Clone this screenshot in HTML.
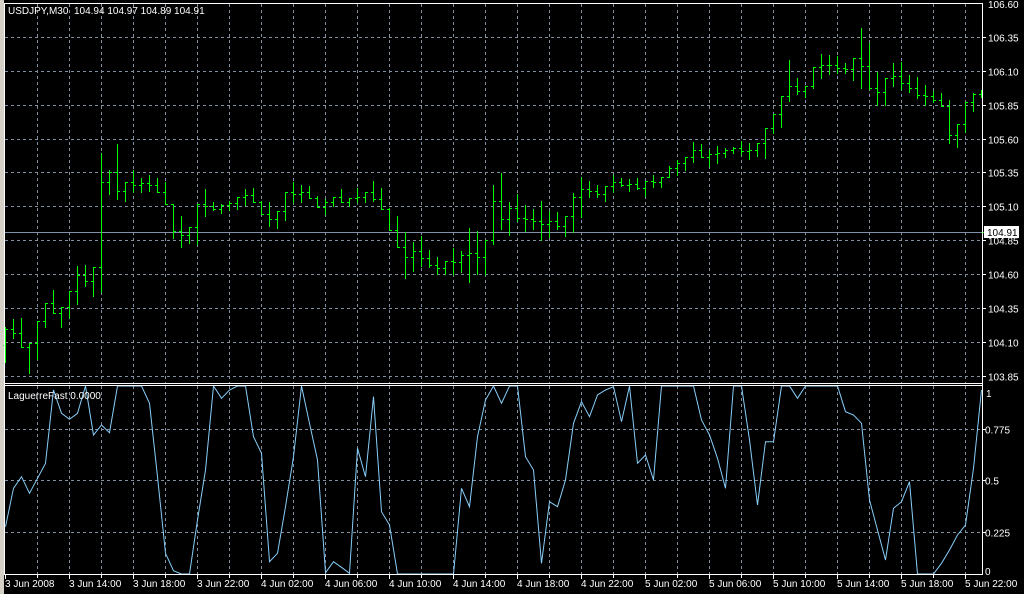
<!DOCTYPE html>
<html><head><meta charset="utf-8"><style>
html,body{margin:0;padding:0;background:#000;width:1024px;height:594px;overflow:hidden}
svg{display:block}
text{font-family:"Liberation Sans",sans-serif;font-size:10px;fill:#fff;white-space:pre}
</style></head><body>
<svg id="s" width="1024" height="594" xmlns="http://www.w3.org/2000/svg" shape-rendering="crispEdges">
<rect width="1024" height="594" fill="#000"/>
<rect x="0" y="0" width="4" height="594" fill="#d4d0c8"/>
<g id="grid" stroke="#8090a0" stroke-width="1" stroke-dasharray="3,3" fill="none"></g>
<line x1="5" y1="232.5" x2="982" y2="232.5" stroke="#8090a8" stroke-width="1"/>
<g id="bars" stroke="#00ff00" stroke-width="1" fill="none"></g>
<polyline id="ind" fill="none" stroke="#87cefa" stroke-width="1" shape-rendering="auto"/>
<g stroke="#fff" stroke-width="1" fill="none">
<line x1="4.5" y1="3" x2="4.5" y2="575"/>
<line x1="982.5" y1="3" x2="982.5" y2="575"/>
<line x1="4" y1="3.5" x2="983" y2="3.5"/>
<line x1="4" y1="383.5" x2="983" y2="383.5"/>
<line x1="4" y1="385.5" x2="983" y2="385.5"/>
<line x1="4" y1="574.5" x2="983" y2="574.5"/>
</g>
<g id="ticks" stroke="#fff" stroke-width="1"></g>
<g id="labels"></g>
<text x="8" y="14" xml:space="preserve">USDJPY,M30  104.94 104.97 104.89 104.91</text>
<text x="8" y="399">LaguerreFast 0.0000</text>
<rect x="984" y="226" width="35" height="12" fill="#fff"/>
<text x="987" y="236" style="fill:#000">104.91</text>
</svg>
<script>
var NS="http://www.w3.org/2000/svg";
function el(p,t,a,txt){var e=document.createElementNS(NS,t);for(var k in a)e.setAttribute(k,a[k]);if(txt!=null)e.textContent=txt;document.getElementById(p).appendChild(e);return e;}
for(var x=37;x<982;x+=32){el("grid","line",{x1:x+.5,y1:4,x2:x+.5,y2:383});el("grid","line",{x1:x+.5,y1:386,x2:x+.5,y2:574});}
var plab=["106.35","106.10","105.85","105.60","105.35","105.10","104.85","104.60","104.35","104.10","103.85"];
for(var k=0;k<11;k++){var y=Math.round(36.7+33.94*k)+.5;el("grid","line",{x1:5,y1:y,x2:982,y2:y});el("ticks","line",{x1:982,y1:y,x2:986,y2:y});el("labels","text",{x:988,y:y+4},plab[k]);}
el("labels","text",{x:988,y:8},"106.60");
var il=[[429.5,"0.775"],[480.5,"0.5"],[532.5,"0.225"]];
il.forEach(function(a){el("grid","line",{x1:5,y1:a[0],x2:982,y2:a[0]});el("ticks","line",{x1:982,y1:a[0],x2:986,y2:a[0]});el("labels","text",{x:985,y:a[0]+4},a[1]);});
el("labels","text",{x:986,y:397},"1");el("labels","text",{x:985,y:575},"0");
var tl=["3 Jun 2008","3 Jun 14:00","3 Jun 18:00","3 Jun 22:00","4 Jun 02:00","4 Jun 06:00","4 Jun 10:00","4 Jun 14:00","4 Jun 18:00","4 Jun 22:00","5 Jun 02:00","5 Jun 06:00","5 Jun 10:00","5 Jun 14:00","5 Jun 18:00","5 Jun 22:00"];
for(var i=0;i<16;i++){var x=5+64*i;el("ticks","line",{x1:x+.5,y1:575,x2:x+.5,y2:579});if(i>0)el("ticks","line",{x1:x-31.5,y1:575,x2:x-31.5,y2:578});el("labels","text",{x:x,y:587},tl[i]);}
var A=[[590,695],[568,625],[565,650],[640,730],[572,688],[520,592],[480,548],[532,592],[482,565],[408,523],[405,467],[410,497],[68,487],[120,193],[42,207],[155,212],[120,187],[145,187],[135,182],[145,187],[155,222],[222,325],[258,350],[292,340],[222,342],[177,257],[215,240],[222,250],[212,240],[200,237],[177,225],[175,215],[212,252],[215,287],[242,293],[185,270],[155,217],[165,217],[167,203],[198,232],[208,252],[202,227],[177,215],[205,227],[175,217],[185,215],[153,212],[175,237],[235,300],[257,352],[307,445],[337,422],[318,408],[360,410],[380,432],[393,433],[355,433],[363,427],[295,457],[303,432],[330,432],[165,343]];
var B=[[460,627],[547,645],[523,602],[555,633],[567,627],[543,660],[573,650],[577,627],[587,647],[520,635],[470,590],[483,530],[495,530],[498,543],[465,515],[475,498],[477,513],[473,508],[483,527],[465,500],[472,500],[438,472],[420,465],[410,450],[367,425],[372,410],[390,438],[378,428],[385,410],[380,398],[362,403],[368,418],[370,407],[325,415],[282,340],[228,322],[120,243],[175,223],[198,230],[142,203],[102,175],[105,162],[108,160],[130,158],[113,180],[25,203],[68,207],[155,255],[175,255],[130,197],[127,207],[165,215],[172,233],[195,255],[213,245],[220,257],[240,370],[312,380],[247,336],[220,272],[210,232]];
var P=[];A.forEach(function(a){P.push([130+a[0]/3,130+a[1]/3]);});B.forEach(function(a){P.push([20+a[0]/3,20+a[1]/3]);});
var cl=[];for(var i=0;i<P.length;i++){var n=P[i+1]||P[i];var m=(n[0]+n[1])/2;cl.push(Math.max(P[i][0],Math.min(P[i][1],m)));}
cl[P.length-1]=232;
for(var i=0;i<P.length;i++){var x=5+8*i+.5,h=Math.round(P[i][0]),l=Math.round(P[i][1]);
var o=i?Math.max(h,Math.min(l,cl[i-1])):(h+l)/2;o=Math.round(o)+.5;var c=Math.round(cl[i])+.5;
el("bars","line",{x1:x,y1:h,x2:x,y2:l+1});el("bars","line",{x1:x-2.5,y1:o,x2:x,y2:o});el("bars","line",{x1:x,y1:c,x2:x+2.5,y2:c});}
var I=[440,325,290,340,295,250,30,100,118,100,18,165,135,158,18,18,18,18,70,290,520,572,582,582,420,270,18,55,30,18,18,170,220,545,520,380,230,18,130,240,578,545,562,580,205,290,50,395,435,582,582,582,582,582,582,582,582,325,380,170,60,18,
70,18,18,230,270,550,365,380,300,130,65,110,45,30,20,125,18,250,225,300,18,18,18,18,18,120,165,235,325,18,18,180,375,185,185,18,18,55,18,18,18,18,18,95,105,130,360,450,540,385,365,305,582,582,582,550,510,465,435,265,30];
var pts=[];for(var i=0;i<I.length;i++){pts.push((5+8*i+.5)+","+(380+I[i]/3).toFixed(1));}
document.getElementById("ind").setAttribute("points",pts.join(" "));
</script>
</body></html>
